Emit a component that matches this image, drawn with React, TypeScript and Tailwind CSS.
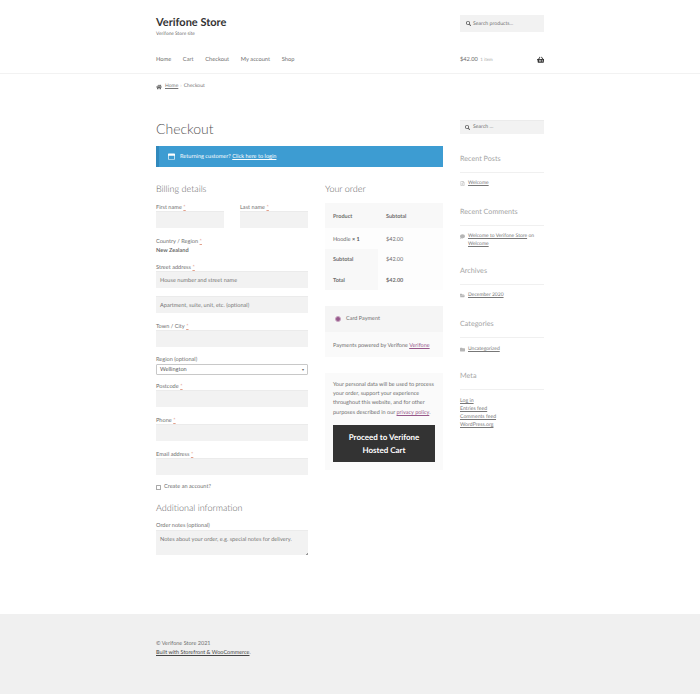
import { FaHome, FaSearch, FaShoppingBasket, FaRegFileAlt, FaComment, FaFolderOpen, FaFolder, FaRegWindowMaximize } from "react-icons/fa"

const font = { fontFamily: '"Lato", "Liberation Sans", sans-serif' }

function Req() {
  return <span className="text-[#e2a08c] underline ml-[1.5px]">*</span>
}

function Label({ text, req, className = "" }: { text: string; req?: boolean; className?: string }) {
  return (
    <div className={`h-[8px] leading-[10px] text-[5.6px] text-[#6d6d6d] ${className}`}>
      {text}
      {req && <Req />}
    </div>
  )
}

function Input({ placeholder, className = "" }: { placeholder?: string; className?: string }) {
  return (
    <div className={`h-[17px] bg-[#f2f2f2] border-t border-[#ebebeb] px-[4px] pt-[2px] flex items-center text-[5.6px] text-[#757575] ${className}`}>
      {placeholder}
    </div>
  )
}

function WidgetTitle({ text, className = "" }: { text: string; className?: string }) {
  return (
    <div className={`h-[14px] leading-[14px] text-[7.2px] text-[#a5a5a5] border-b border-[#f0f0f0] box-content pb-[6px] ${className}`}>
      {text}
    </div>
  )
}

function SideLink({ icon, children, className = "" }: { icon: React.ReactNode; children: React.ReactNode; className?: string }) {
  return (
    <div className={`flex text-[5px] leading-[7.5px] text-[#777] ${className}`}>
      <span className="w-[8px] pt-[1px] text-[#b5b5b5] shrink-0">{icon}</span>
      <div>{children}</div>
    </div>
  )
}

export default function App() {
  return (
    <div style={font} className="w-[700px] h-[694px] bg-white flex flex-col overflow-hidden antialiased [text-rendering:geometricPrecision]">
      {/* header */}
      <header className="h-[74px] border-b border-[#f2f2f2] shrink-0">
        <div className="w-[388px] mx-auto">
          <div className="flex justify-between pt-[15px]">
            <div className="pt-[1px]">
              <div className="text-[11px] leading-[14px] font-bold text-[#333]">Verifone Store</div>
              <div className="text-[4.8px] leading-[8px] text-[#6d6d6d]">Verifone Store site</div>
            </div>
            <div className="w-[84px] h-[17px] bg-[#f2f2f2] flex items-center pl-[6px] gap-[2px] text-[5.2px] text-[#757575]">
              <FaSearch className="text-[5px] text-[#555]" />
              <span className="pt-[2px]">Search products...</span>
            </div>
          </div>
          <div className="flex justify-between items-center mt-[14px] h-[16px]">
            <nav className="flex gap-[11.7px] text-[5.7px] text-[#6d6d6d]">
              <span>Home</span>
              <span>Cart</span>
              <span>Checkout</span>
              <span>My account</span>
              <span>Shop</span>
            </nav>
            <div className="w-[84px] flex items-center justify-between text-[5.7px] text-[#6d6d6d]">
              <span>
                $42.00 <span className="text-[4.5px] text-[#aaa] ml-[1px]">1 item</span>
              </span>
              <FaShoppingBasket className="text-[7.5px] text-[#333]" />
            </div>
          </div>
        </div>
      </header>

      <div className="w-[388px] mx-auto flex-1">
        {/* breadcrumb */}
        <div className="flex items-center h-[8px] mt-[9px] text-[5px] text-[#777]">
          <FaHome className="text-[6px] text-[#666] mr-[3px]" />
          <span className="underline">Home</span>
          <span className="mx-[2px] text-[#bbb]">›</span>
          <span>Checkout</span>
        </div>

        <div className="flex justify-between mt-[29px]">
          {/* main column */}
          <main className="w-[287px]">
            <h1 className="h-[28px] -mt-[5px] leading-[28px] text-[14px] font-light text-[#555]">Checkout</h1>
            <div className="h-[21px] mt-[3px] pt-[2px] bg-[#3d9cd2] border-l-[3px] border-[#3089bd] flex items-center pl-[9px] text-[5.6px] text-white">
              <FaRegWindowMaximize className="text-[7px] mr-[5px] -mt-[2px]" />
              <span>
                Returning customer? <span className="underline">Click here to login</span>
              </span>
            </div>

            <div className="flex justify-between mt-[15px]">
              {/* billing */}
              <div className="w-[152px]">
                <div className="h-[14px] leading-[14px] text-[9px] font-light text-[#666]">Billing details</div>
                <div className="flex justify-between mt-[7px]">
                  <div className="w-[68px]">
                    <Label text="First name" req />
                    <Input />
                  </div>
                  <div className="w-[68px]">
                    <Label text="Last name" req />
                    <Input />
                  </div>
                </div>
                <Label text="Country / Region" req className="mt-[9px]" />
                <div className="h-[9px] leading-[11px] text-[5.6px] font-bold text-[#6d6d6d]">New Zealand</div>
                <Label text="Street address" req className="mt-[9px]" />
                <Input placeholder="House number and street name" />
                <Input placeholder="Apartment, suite, unit, etc. (optional)" className="mt-[8px]" />
                <Label text="Town / City" req className="mt-[9px]" />
                <Input />
                <Label text="Region (optional)" className="mt-[8px]" />
                <div className="h-[11px] mt-[1px] pt-[1px] border border-[#c8c8c8] rounded-[1px] flex items-center justify-between px-[3px] text-[5.6px] text-[#555]">
                  <span>Wellington</span>
                  <span className="text-[4px] text-[#666]">▾</span>
                </div>
                <Label text="Postcode" req className="mt-[7px]" />
                <Input />
                <Label text="Phone" req className="mt-[9px]" />
                <Input />
                <Label text="Email address" req className="mt-[9px]" />
                <Input />
                <div className="flex items-center h-[10px] mt-[7px] text-[5.6px] text-[#6d6d6d]">
                  <span className="w-[5px] h-[5px] border border-[#aaa] rounded-[0.5px] mr-[3px]" />
                  Create an account?
                </div>
                <div className="h-[14px] leading-[14px] mt-[9px] text-[9px] font-light text-[#666]">Additional information</div>
                <Label text="Order notes (optional)" className="mt-[6px]" />
                <div className="relative h-[25px] mt-[1px] bg-[#f2f2f2] border-t border-[#ebebeb] px-[4px] pt-[5px] text-[5.6px] leading-[8px] text-[#757575]">
                  Notes about your order, e.g. special notes for delivery.
                  <span className="absolute right-0 bottom-0 w-[2px] h-[2px] border-b border-r border-[#999]" />
                </div>
              </div>

              {/* order */}
              <div className="w-[118px]">
                <div className="h-[14px] leading-[14px] text-[9px] font-light text-[#666]">Your order</div>
                <div className="mt-[7px] text-[5.5px] text-[#6d6d6d]">
                  <div className="flex h-[25px] pt-[3px] bg-[#f8f8f8] items-center font-bold">
                    <div className="w-[53px] pl-[8px]">Product</div>
                    <div className="pl-[8px]">Subtotal</div>
                  </div>
                  <div className="flex h-[21px] pt-[3px] bg-[#fdfdfd] items-center">
                    <div className="w-[53px] pl-[8px]">
                      Hoodie <b className="text-[#555]">× 1</b>
                    </div>
                    <div className="pl-[8px]">$42.00</div>
                  </div>
                  <div className="flex h-[20px] items-center bg-[#fdfdfd]">
                    <div className="w-[53px] h-full pl-[8px] pt-[3px] flex items-center bg-[#f8f8f8] font-bold">Subtotal</div>
                    <div className="pl-[8px] pt-[3px]">$42.00</div>
                  </div>
                  <div className="flex h-[21px] items-center bg-[#fdfdfd]">
                    <div className="w-[53px] h-full pl-[8px] pt-[3px] flex items-center bg-[#f8f8f8] font-bold">Total</div>
                    <div className="pl-[8px] pt-[3px] font-bold">$42.00</div>
                  </div>
                </div>

                <div className="mt-[16px] text-[5.5px] text-[#6d6d6d]">
                  <div className="h-[26px] bg-[#f5f5f5] flex items-center pl-[10px]">
                    <span className="w-[6px] h-[6px] rounded-full bg-[#96588a] border-[1.5px] border-[#c9a7c2] mr-[5px]" />
                    <span className="pt-[1px]">Card Payment</span>
                  </div>
                  <div className="h-[25px] pt-[3px] bg-[#fafafa] flex items-center pl-[8px]">
                    <span>
                      Payments powered by Verifone <span className="underline text-[#96588a]">Verifone</span>
                    </span>
                  </div>
                </div>

                <div className="mt-[16px] h-[97px] bg-[#fafafa] px-[8px] pt-[8px]">
                  <p className="text-[5.5px] leading-[9.2px] text-[#6d6d6d]">
                    Your personal data will be used to process your order, support your experience throughout this website, and for other purposes described in our{" "}
                    <span className="underline text-[#96588a]">privacy policy</span>.
                  </p>
                  <div className="h-[37px] mt-[7px] pt-[1px] bg-[#333] flex items-center justify-center text-center text-[8px] leading-[13px] font-bold text-white">
                    Proceed to Verifone
                    <br />
                    Hosted Cart
                  </div>
                </div>
              </div>
            </div>
          </main>

          {/* sidebar */}
          <aside className="w-[84px]">
            <div className="h-[14px] bg-[#f2f2f2] border-t border-[#ebebeb] flex items-center pl-[5px] gap-[3px] text-[5.2px] text-[#757575]">
              <FaSearch className="text-[5px] text-[#555]" />
              <span className="pt-[1px]">Search …</span>
            </div>
            <WidgetTitle text="Recent Posts" className="mt-[18px]" />
            <SideLink icon={<FaRegFileAlt className="text-[5px]" />} className="mt-[7px]">
              <span className="underline">Welcome</span>
            </SideLink>
            <WidgetTitle text="Recent Comments" className="mt-[17.5px]" />
            <SideLink icon={<FaComment className="text-[5px]" />} className="mt-[7px]">
              <span className="underline">Welcome to Verifone Store</span> on <span className="underline">Welcome</span>
            </SideLink>
            <WidgetTitle text="Archives" className="mt-[16px]" />
            <SideLink icon={<FaFolderOpen className="text-[5px]" />} className="mt-[7px]">
              <span className="underline">December 2020</span>
            </SideLink>
            <WidgetTitle text="Categories" className="mt-[17px]" />
            <SideLink icon={<FaFolder className="text-[5px]" />} className="mt-[8px]">
              <span className="underline">Uncategorized</span>
            </SideLink>
            <WidgetTitle text="Meta" className="mt-[16px]" />
            <div className="mt-[7px] text-[5.2px] leading-[8px] text-[#777] underline">
              <div>Log in</div>
              <div>Entries feed</div>
              <div>Comments feed</div>
              <div>WordPress.org</div>
            </div>
          </aside>
        </div>
      </div>

      {/* footer */}
      <footer className="h-[80px] bg-[#f0f0f0] shrink-0">
        <div className="w-[388px] mx-auto pt-[26px] text-[5.5px] leading-[9px] text-[#6d6d6d]">
          <div>© Verifone Store 2021</div>
          <div>
            <span className="underline text-[#444]">Built with Storefront &amp; WooCommerce</span>.
          </div>
        </div>
      </footer>
    </div>
  )
}
